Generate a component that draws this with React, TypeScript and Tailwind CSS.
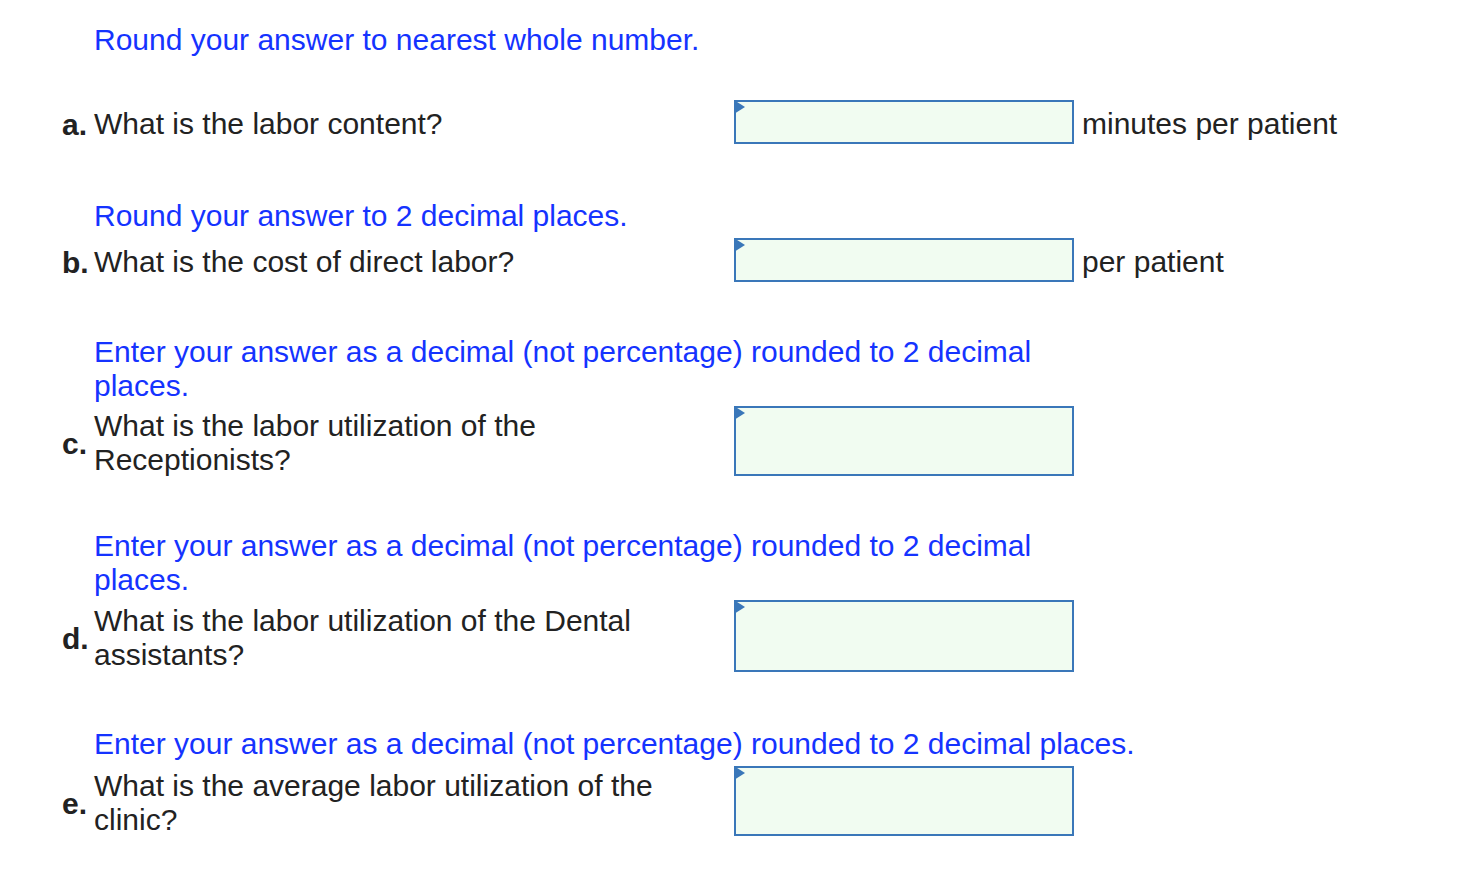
import React from 'react';

type Item = {
  id: string;
  note: string;
  noteClass: string;
  question: string;
  unit?: string;
  boxClass: string;
  rowClass: string;
};

const items: Item[] = [
  {
    id: 'a',
    note: 'Round your answer to nearest whole number.',
    noteClass: 'mt-0 w-[980px]',
    question: 'What is the labor content?',
    unit: 'minutes per patient',
    boxClass: 'h-[44px]',
    rowClass: 'mt-[43px]',
  },
  {
    id: 'b',
    note: 'Round your answer to 2 decimal places.',
    noteClass: 'mt-[55px] w-[980px]',
    question: 'What is the cost of direct labor?',
    unit: 'per patient',
    boxClass: 'h-[44px]',
    rowClass: 'mt-[5px]',
  },
  {
    id: 'c',
    note: 'Enter your answer as a decimal (not percentage) rounded to 2 decimal places.',
    noteClass: 'mt-[53px] w-[980px]',
    question: 'What is the labor utilization of the Receptionists?',
    boxClass: 'h-[70px]',
    rowClass: 'mt-[2px]',
  },
  {
    id: 'd',
    note: 'Enter your answer as a decimal (not percentage) rounded to 2 decimal places.',
    noteClass: 'mt-[52px] w-[980px]',
    question: 'What is the labor utilization of the Dental assistants?',
    boxClass: 'h-[72px]',
    rowClass: 'mt-[3px]',
  },
  {
    id: 'e',
    note: 'Enter your answer as a decimal (not percentage) rounded to 2 decimal places.',
    noteClass: 'mt-[55px] w-[1100px]',
    question: 'What is the average labor utilization of the clinic?',
    boxClass: 'h-[70px]',
    rowClass: 'mt-[4px]',
  },
];

const AnswerBox = ({ className }: { className: string }) => (
  <div className={`relative w-[340px] shrink-0 border-2 border-[#3a77b9] bg-[#f1fcf1] ${className}`}>
    <svg className="absolute -left-[2px] -top-[2px]" width="11" height="14" viewBox="0 0 11 14">
      <polygon points="0,0 11,7 0,14" fill="#3a77b9" />
    </svg>
  </div>
);

export default function App() {
  return (
    <div className="min-h-screen bg-white pl-[62px] pt-[23px] font-['Liberation_Sans',Arial,sans-serif] text-[30px] leading-[34px] text-[#222]">
      {items.map((item) => (
        <div key={item.id}>
          <div className={`pl-[32px] text-[#1533ff] ${item.noteClass}`}>{item.note}</div>
          <div className={`flex items-center ${item.rowClass}`}>
            <div className="w-[32px] shrink-0 pt-[5px] font-bold">{item.id}.</div>
            <div className="w-[600px] shrink-0 pt-[4px]">{item.question}</div>
            <div className="ml-[40px]">
              <AnswerBox className={item.boxClass} />
            </div>
            {item.unit && <div className="ml-2 pt-[4px]">{item.unit}</div>}
          </div>
        </div>
      ))}
    </div>
  );
}
